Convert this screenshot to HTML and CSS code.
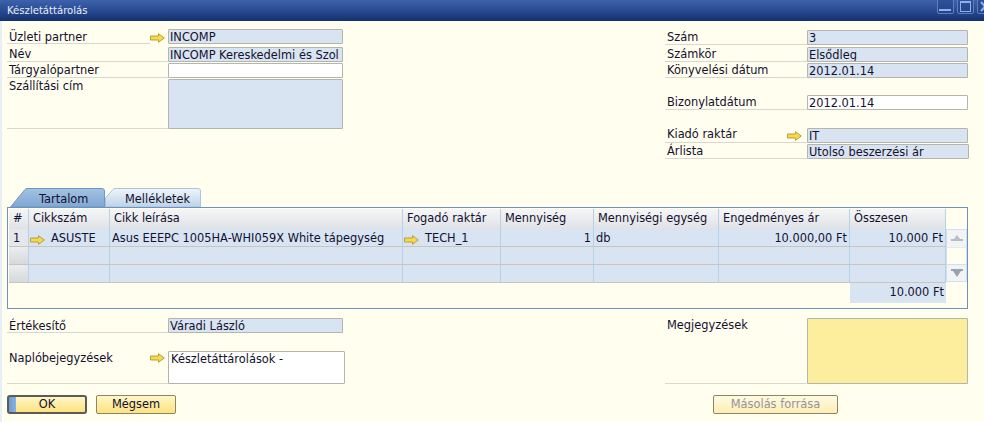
FILE: index.html
```html
<!doctype html>
<html>

<head>
    <meta charset="utf-8">
    <title>Készletáttárolás</title>
    <link rel="stylesheet" href="styles.css">
</head>

<body>
    <div class="window">
        <div class="titlebar">
            <span class="title">Készletáttárolás</span>
            <div class="winbtns">
                <span class="winbtn"><svg width="15" height="14" viewBox="0 0 15 14"><rect x="1" y="9" width="12" height="2" fill="#8fb0e8"/></svg></span>
                <span class="winbtn"><svg width="15" height="14" viewBox="0 0 15 14"><rect x="2.500" y="1.500" width="10" height="10" fill="none" stroke="#8fb0e8"/><rect x="2" y="1" width="11" height="2" fill="#8fb0e8"/></svg></span>
                <span class="winbtn"><svg width="15" height="14" viewBox="0 0 15 14"><path d="M3 2l8 9M11 2l-8 9" stroke="#8fb0e8" stroke-width="2"/></svg></span>
            </div>
        </div>

        <div class="head">
            <div class="col col-left">
                <div class="row r-partner">
                    <span class="lbl">Üzleti partner</span>
                    <svg class="arrow" viewBox="0 0 15 10"><path d="M.5 3h8V.7L14.300 5 8.500 9.300V7h-8z" fill="#f5d94e" stroke="#b99f3a"/></svg>
                    <span class="fld fld-ro fld-left">INCOMP</span>
                </div>
                <div class="row r-a r-gap2">
                    <span class="lbl">Név</span>
                    <span class="fld fld-ro fld-left">INCOMP Kereskedelmi és Szol</span>
                </div>
                <div class="row r-b">
                    <span class="lbl">Tárgyalópartner</span>
                    <span class="fld fld-left"></span>
                </div>
                <div class="row r-b r-addr">
                    <span class="lbl">Szállítási cím</span>
                    <span class="fld fld-ro fld-left fld-tall"></span>
                </div>
            </div>

            <div class="col col-right">
                <div class="row r-a r-top">
                    <span class="lbl">Szám</span>
                    <span class="fld fld-ro fld-right">3</span>
                </div>
                <div class="row r-a r-gap2">
                    <span class="lbl">Számkör</span>
                    <span class="fld fld-ro fld-right">Elsődleg</span>
                </div>
                <div class="row r-b">
                    <span class="lbl">Könyvelési dátum</span>
                    <span class="fld fld-ro fld-right">2012.01.14</span>
                </div>
                <div class="row r-a r-gap17">
                    <span class="lbl">Bizonylatdátum</span>
                    <span class="fld fld-right">2012.01.14</span>
                </div>
                <div class="row r-a r-gap18">
                    <span class="lbl">Kiadó raktár</span>
                    <svg class="arrow arrow-right" viewBox="0 0 15 10"><path d="M.5 3h8V.7L14.300 5 8.500 9.300V7h-8z" fill="#f5d94e" stroke="#b99f3a"/></svg>
                    <span class="fld fld-ro fld-right">IT</span>
                </div>
                <div class="row r-b">
                    <span class="lbl">Árlista</span>
                    <span class="fld fld-ro fld-wide">Utolsó beszerzési ár</span>
                </div>
            </div>
        </div>

        <div class="tabs">
            <div class="tab tab-active">
                <svg class="tab-bg" width="95" height="19" viewBox="0 0 95 19">
                    <defs><linearGradient id="tabOn" x1="0" y1="0" x2="0" y2="1"><stop offset="0" stop-color="#a3c2e3"/><stop offset="1" stop-color="#7fa8d4"/></linearGradient></defs>
                    <path d="M.5 19L15 1.500Q16 .5 17 .5H92Q94.500 .5 94.500 3V19z" fill="url(#tabOn)" stroke="#6f97c4"/>
                </svg>
                <span class="tab-text">Tartalom</span>
            </div>
            <div class="tab tab-off">
                <svg class="tab-bg" width="96" height="19" viewBox="0 0 96 19">
                    <defs><linearGradient id="tabOff" x1="0" y1="0" x2="0" y2="1"><stop offset="0" stop-color="#eff5fa"/><stop offset="1" stop-color="#bcd3e9"/></linearGradient></defs>
                    <path d="M.5 19V10L8 1.500Q9 .5 10 .5H93Q95.500 .5 95.500 3V19z" fill="url(#tabOff)" stroke="#a9c4de"/>
                </svg>
                <span class="tab-text">Mellékletek</span>
            </div>
        </div>

        <div class="panel">
            <div class="grid">
                <div class="gh">#</div>
                <div class="gh">Cikkszám</div>
                <div class="gh">Cikk leírása</div>
                <div class="gh">Fogadó raktár</div>
                <div class="gh">Mennyiség</div>
                <div class="gh">Mennyiségi egység</div>
                <div class="gh">Engedményes ár</div>
                <div class="gh">Összesen</div>

                <div class="gn gn-first">1</div>
                <div class="gc gc-link"><svg class="arrow" viewBox="0 0 15 10"><path d="M.5 3h8V.7L14.300 5 8.500 9.300V7h-8z" fill="#f5d94e" stroke="#b99f3a"/></svg>ASUSTE</div>
                <div class="gc">Asus EEEPC 1005HA-WHI059X White tápegység</div>
                <div class="gc gc-link"><svg class="arrow" viewBox="0 0 15 10"><path d="M.5 3h8V.7L14.300 5 8.500 9.300V7h-8z" fill="#f5d94e" stroke="#b99f3a"/></svg>TECH_1</div>
                <div class="gc gc-num">1</div>
                <div class="gc">db</div>
                <div class="gc gc-num">10.000,00 Ft</div>
                <div class="gc gc-num">10.000 Ft</div>

                <div class="gn"></div>
                <div class="gc"></div>
                <div class="gc"></div>
                <div class="gc"></div>
                <div class="gc"></div>
                <div class="gc"></div>
                <div class="gc"></div>
                <div class="gc"></div>

                <div class="gn"></div>
                <div class="gc"></div>
                <div class="gc"></div>
                <div class="gc"></div>
                <div class="gc"></div>
                <div class="gc"></div>
                <div class="gc"></div>
                <div class="gc"></div>

                <div class="total">10.000 Ft</div>
            </div>
            <div class="scroll">
                <span class="scroll-btn scroll-up"><svg width="12" height="8" viewBox="0 0 12 8"><path d="M6 0l3 4h3v2H0V4h3z" fill="#b4bec7"/></svg></span>
                <span class="scroll-btn scroll-down"><svg width="12" height="8" viewBox="0 0 12 8"><path d="M0 0h12v2h-2L6 8 2 2H0z" fill="#98a3ad"/></svg></span>
            </div>
        </div>

        <div class="foot">
            <div class="col col-left">
                <div class="row r-a r-seller">
                    <span class="lbl">Értékesítő</span>
                    <span class="fld fld-ro fld-left">Váradi László</span>
                </div>
                <div class="row r-journal">
                    <span class="lbl">Naplóbejegyzések</span>
                    <svg class="arrow" viewBox="0 0 15 10"><path d="M.5 3h8V.7L14.300 5 8.500 9.300V7h-8z" fill="#f5d94e" stroke="#b99f3a"/></svg>
                    <span class="fld fld-journal">Készletáttárolások -</span>
                </div>
            </div>
            <div class="col col-right">
                <div class="row r-notes">
                    <span class="lbl">Megjegyzések</span>
                    <span class="fld fld-notes"></span>
                </div>
            </div>
        </div>

        <div class="buttons">
            <button class="btn btn-ok">OK</button>
            <button class="btn btn-cancel">Mégsem</button>
            <button class="btn btn-copy">Másolás forrása</button>
        </div>
    </div>
</body>

</html>
```

FILE: styles.css
```css
html,
body {
    margin: 0;
    height: 100%;
    overflow: hidden;
}

.window {
    width: 984px;
    height: 422px;
    background: #fffeef;
    box-shadow: inset 2px 0 #e6eef6;
    font-family: "DejaVu Sans", Verdana, sans-serif;
    font-size: 11.400px;
    line-height: 13px;
    color: #14102e;
}

.titlebar {
    height: 21px;
    display: flex;
    justify-content: space-between;
    overflow: hidden;
    background: linear-gradient(#3d62ab, #27488f 55%, #14316f);
}

.title {
    color: #e9eef8;
    font-size: 10.100px;
    padding: 4px 0 0 7px;
}

.winbtns {
    display: flex;
    gap: 3px;
    margin-right: -10px;
}

.winbtn {
    width: 17px;
    height: 15px;
    margin-top: -1px;
    box-sizing: border-box;
    border: 1px solid #5f7fbb;
    border-radius: 2px;
    background: linear-gradient(#2f5199, #24438a);
}

.winbtn svg {
    display: block;
}

.head {
    display: flex;
    justify-content: space-between;
    height: 167px;
    padding: 8px 16px 0 7px;
    box-sizing: border-box;
}

.col-left {
    width: 336px;
}

.col-right {
    width: 303px;
}

.row {
    display: flex;
    align-items: flex-start;
    border-bottom: 1px solid #d8d8d0;
}

.lbl {
    flex: 1;
    padding: 1px 0 0 2px;
}

.arrow {
    width: 15px;
    height: 10px;
    flex: none;
    margin: 4px 3px 0 0;
}

.arrow-right {
    margin: 3px 5px 0 0;
}

.fld {
    display: block;
    box-sizing: border-box;
    height: 15px;
    border: 1px solid #b5b5b0;
    border-radius: 1px;
    background: #fff;
    padding-left: 1px;
    line-height: 14px;
    white-space: nowrap;
    overflow: hidden;
    flex: none;
}

.fld-ro {
    background: #d8e4f2;
}

.fld-left {
    width: 175px;
}

.fld-right {
    width: 161px;
}

.fld-wide {
    width: 162px;
    margin-right: -1px;
}

.r-partner {
    height: 15px;
    margin-bottom: 3px;
    border-bottom: none;
}

.r-partner .lbl {
    padding-top: 2px;
    box-sizing: border-box;
    height: 15px;
    border-bottom: 1px solid #d8d8d0;
}

.r-a {
    height: 14px;
}

.r-b {
    height: 15px;
}

.r-b .lbl {
    padding-top: 2px;
}

.r-b .fld {
    margin-top: 1px;
}

.r-top {
    margin-top: 1px;
}

.r-gap2 {
    margin-top: 2px;
}

.r-partner + .r-gap2 {
    margin-top: 0;
}

.r-gap17 {
    margin-top: 17px;
}

.r-gap18 {
    margin-top: 18px;
}

.r-gap18 .lbl {
    padding-top: 0;
}

.r-addr {
    height: 50px;
}

.fld-tall {
    height: 50px;
}

.tabs {
    display: flex;
    height: 19px;
    padding-left: 10px;
}

.tab {
    position: relative;
    height: 19px;
    padding-top: 5px;
    box-sizing: border-box;
}

.tab-active {
    width: 95px;
    padding-left: 29px;
}

.tab-off {
    width: 96px;
    padding-left: 20px;
}

.tab-bg {
    position: absolute;
    left: 0;
    top: 0;
}

.tab-text {
    position: relative;
}

.panel {
    width: 961px;
    height: 102px;
    box-sizing: border-box;
    margin-left: 7px;
    border: 1px solid #6d93bb;
    display: flex;
    align-items: flex-start;
}

.grid {
    display: grid;
    grid-template-columns: 20px 81px 293px 98px 93px 125px 131px 96px;
    grid-template-rows: 20px 18px 18px 18px 20px;
    margin: 1px 0 0 1px;
}

.gh {
    background: linear-gradient(#f5f6f7, #dfe2e6);
    border-right: 1px solid #b8d0e6;
    padding: 3px 0 0 4px;
    box-sizing: border-box;
    white-space: nowrap;
    overflow: hidden;
}

.gn {
    background: linear-gradient(#ebedef, #d6d9dd);
    border-right: 1px solid #b8d0e6;
    border-bottom: 1px solid #c6c6be;
    box-sizing: border-box;
    padding: 3px 0 0 4px;
}

.gn-first {
    background: #e4e8ec;
}

.gc {
    background: #d8e4f2;
    border-right: 1px solid #b8d0e6;
    border-bottom: 1px solid #c6c6be;
    box-sizing: border-box;
    padding: 3px 2px 0 2px;
    white-space: nowrap;
    overflow: hidden;
}

.gc-link {
    display: flex;
    align-items: flex-start;
    gap: 6px;
    padding-left: 1px;
}

.gc-link .arrow {
    margin: 3px 0 0 0;
}

.gc-num {
    text-align: right;
}

.total {
    grid-column: 8;
    background: #d8e4f2;
    text-align: right;
    padding: 3px 2px 0 0;
}

.scroll {
    width: 21px;
    height: 53px;
    margin-top: 21px;
    box-sizing: border-box;
    border: 1px solid #cfe0f0;
    display: flex;
    flex-direction: column;
    justify-content: space-between;
}

.scroll-btn {
    height: 17px;
    background: #f2f4f4;
    display: flex;
    align-items: center;
    justify-content: center;
}

.scroll-up {
    border-bottom: 1px solid #e4ebf1;
}

.scroll-down {
    height: 16px;
    border-top: 1px solid #cfe0f0;
}

.foot {
    display: flex;
    justify-content: space-between;
    height: 86px;
    padding: 9px 16px 0 7px;
    box-sizing: border-box;
}

.r-seller .lbl {
    padding-top: 2px;
}

.r-journal {
    height: 32px;
    margin-top: 18px;
}

.r-journal .arrow {
    margin-top: 2px;
}

.fld-journal {
    width: 177px;
    height: 33px;
    margin-right: -2px;
    padding-left: 2px;
}

.r-notes {
    height: 65px;
}

.fld-notes {
    width: 161px;
    height: 66px;
    background: #fdee9e;
}

.buttons {
    display: flex;
    padding-left: 7px;
}

.btn {
    font: inherit;
    color: #14102e;
    height: 19px;
    padding: 0;
    box-sizing: border-box;
    border: 1px solid #8c8468;
    border-radius: 2px;
    background: linear-gradient(#fff6c8, #fde27e);
}

.btn-ok {
    width: 80px;
    border: 2px solid #5c5c56;
    border-radius: 3px;
    background: linear-gradient(90deg, #6d9bd6 0, #8cb2de 7px, transparent 7px), linear-gradient(#fff6c8, #fde27e);
}

.btn-cancel {
    width: 80px;
    margin-left: 9px;
}

.btn-copy {
    width: 125px;
    margin-left: 537px;
    color: #98929c;
    background: linear-gradient(#fffbe2, #feeeb4);
}
```
